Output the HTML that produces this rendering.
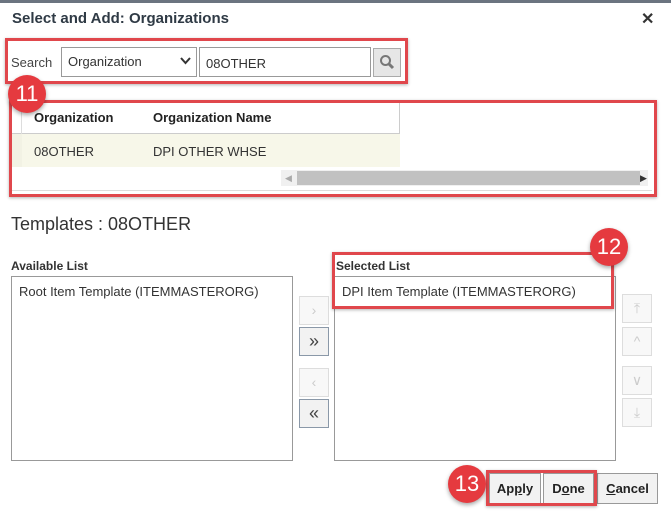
<!DOCTYPE html>
<html><head><style>
body{margin:0;width:671px;height:514px;background:#fff;font-family:"Liberation Sans",Arial,sans-serif;position:relative;overflow:hidden;color:#333}
.a{position:absolute;box-sizing:border-box}
.red{border:3px solid #e0474c;box-shadow:0 1px 3px rgba(0,0,0,.3)}
.badge{background:#e53a3f;color:#fff;border-radius:50%;font-size:22px;text-align:center;box-shadow:0 2px 4px rgba(0,0,0,.35)}
.btn{border:1px solid #999;background:#f2f2f2;font-size:13px;font-weight:bold;text-align:center;line-height:29px;color:#222}
.sb{border:1px solid #8a98a8;background:#f2f2f2;text-align:center;font-size:18px;line-height:26px;color:#444}
.sbd{border:1px solid #ddd;background:#f8f8f8;text-align:center;font-size:14px;line-height:26px;color:#ccc}
</style></head><body>
<div class="a" style="left:0;top:0;width:671px;height:3px;background:#6b7480"></div>
<div class="a" style="left:12px;top:10px;font-size:15px;font-weight:bold;color:#2f3a45">Select and Add: Organizations</div>
<div class="a" style="left:641px;top:9px;font-size:16px;font-weight:bold;color:#333">✕</div>

<div class="a red" style="left:5px;top:38px;width:403px;height:46px"></div>
<div class="a" style="left:11px;top:55px;font-size:13px;color:#444">Search</div>
<div class="a" style="left:61px;top:47px;width:136px;height:30px;border:1px solid #999;font-size:13px;padding:6px 6px;color:#333">Organization</div>
<svg class="a" style="left:180px;top:57px" width="11" height="8"><path d="M1 1L5.5 6L10 1" stroke="#333" stroke-width="2" fill="none"/></svg>
<div class="a" style="left:199px;top:47px;width:172px;height:30px;border:1px solid #999;font-size:13px;padding:8px 6px;color:#333">08OTHER</div>
<div class="a" style="left:373px;top:48px;width:28px;height:29px;border:1px solid #aaa;background:#e6e6e6"></div>
<svg class="a" style="left:379px;top:54px" width="16" height="16"><circle cx="6.5" cy="6.5" r="4.5" stroke="#777" stroke-width="2" fill="none"/><path d="M10 10L14 14" stroke="#777" stroke-width="3"/></svg>

<div class="a red" style="left:9px;top:100px;width:648px;height:97px"></div>
<div class="a" style="left:12px;top:103px;width:388px;height:31px;border-right:1px solid #ccc;border-bottom:1px solid #ccc"></div>
<div class="a" style="left:12px;top:103px;width:10px;height:64px;border-right:1px solid #ddd"></div>
<div class="a" style="left:22px;top:134px;width:378px;height:33px;background:#f7f7e9"></div>
<div class="a" style="left:12px;top:134px;width:10px;height:33px;background:#f2f2e4"></div>
<div class="a" style="left:34px;top:110px;font-size:13px;font-weight:bold;color:#222">Organization</div>
<div class="a" style="left:153px;top:110px;font-size:13px;font-weight:bold;color:#222">Organization Name</div>
<div class="a" style="left:34px;top:144px;font-size:13px">08OTHER</div>
<div class="a" style="left:153px;top:144px;font-size:13px">DPI OTHER WHSE</div>
<div class="a" style="left:281px;top:170px;width:367px;height:16px;background:#f0f0f0"></div>
<div class="a" style="left:297px;top:171px;width:343px;height:14px;background:#c1c1c1"></div>
<div class="a" style="left:285px;top:173px;font-size:9px;color:#aaa">◀</div>
<div class="a" style="left:640px;top:173px;font-size:9px;color:#333">▶</div>
<div class="a" style="left:12px;top:190px;width:640px;height:1px;background:#ddd"></div>
<div class="a badge" style="left:8px;top:75px;width:38px;height:38px;line-height:38px">11</div>

<div class="a" style="left:11px;top:214px;font-size:18px;color:#333">Templates : 08OTHER</div>
<div class="a" style="left:11px;top:259px;font-size:12px;font-weight:bold;color:#333">Available List</div>
<div class="a" style="left:11px;top:276px;width:282px;height:185px;border:1px solid #999"></div>
<div class="a" style="left:19px;top:284px;font-size:13px">Root Item Template (ITEMMASTERORG)</div>

<div class="a sbd" style="left:299px;top:296px;width:30px;height:29px">&#x203A;</div>
<div class="a sb" style="left:299px;top:327px;width:30px;height:29px">»</div>
<div class="a sbd" style="left:299px;top:368px;width:30px;height:29px">&#x2039;</div>
<div class="a sb" style="left:299px;top:399px;width:30px;height:29px">«</div>

<div class="a" style="left:334px;top:276px;width:282px;height:185px;border:1px solid #999"></div>
<div class="a red" style="left:332px;top:252px;width:282px;height:57px;background:transparent"></div>
<div class="a" style="left:336px;top:259px;font-size:12px;font-weight:bold;color:#333">Selected List</div>
<div class="a" style="left:342px;top:284px;font-size:13px">DPI Item Template (ITEMMASTERORG)</div>
<div class="a badge" style="left:590px;top:228px;width:38px;height:38px;line-height:38px">12</div>

<div class="a sbd" style="left:622px;top:294px;width:30px;height:29px">&#x2912;</div>
<div class="a sbd" style="left:622px;top:327px;width:30px;height:29px">^</div>
<div class="a sbd" style="left:622px;top:366px;width:30px;height:29px">&#x2228;</div>
<div class="a sbd" style="left:622px;top:398px;width:30px;height:29px">&#x2913;</div>

<div class="a btn" style="left:489px;top:473px;width:52px;height:31px">Ap<u>p</u>ly</div>
<div class="a btn" style="left:543px;top:473px;width:51px;height:31px">D<u>o</u>ne</div>
<div class="a btn" style="left:597px;top:473px;width:61px;height:31px"><u>C</u>ancel</div>
<div class="a red" style="left:486px;top:470px;width:111px;height:36px"></div>
<div class="a badge" style="left:448px;top:465px;width:38px;height:38px;line-height:38px">13</div>
</body></html>
